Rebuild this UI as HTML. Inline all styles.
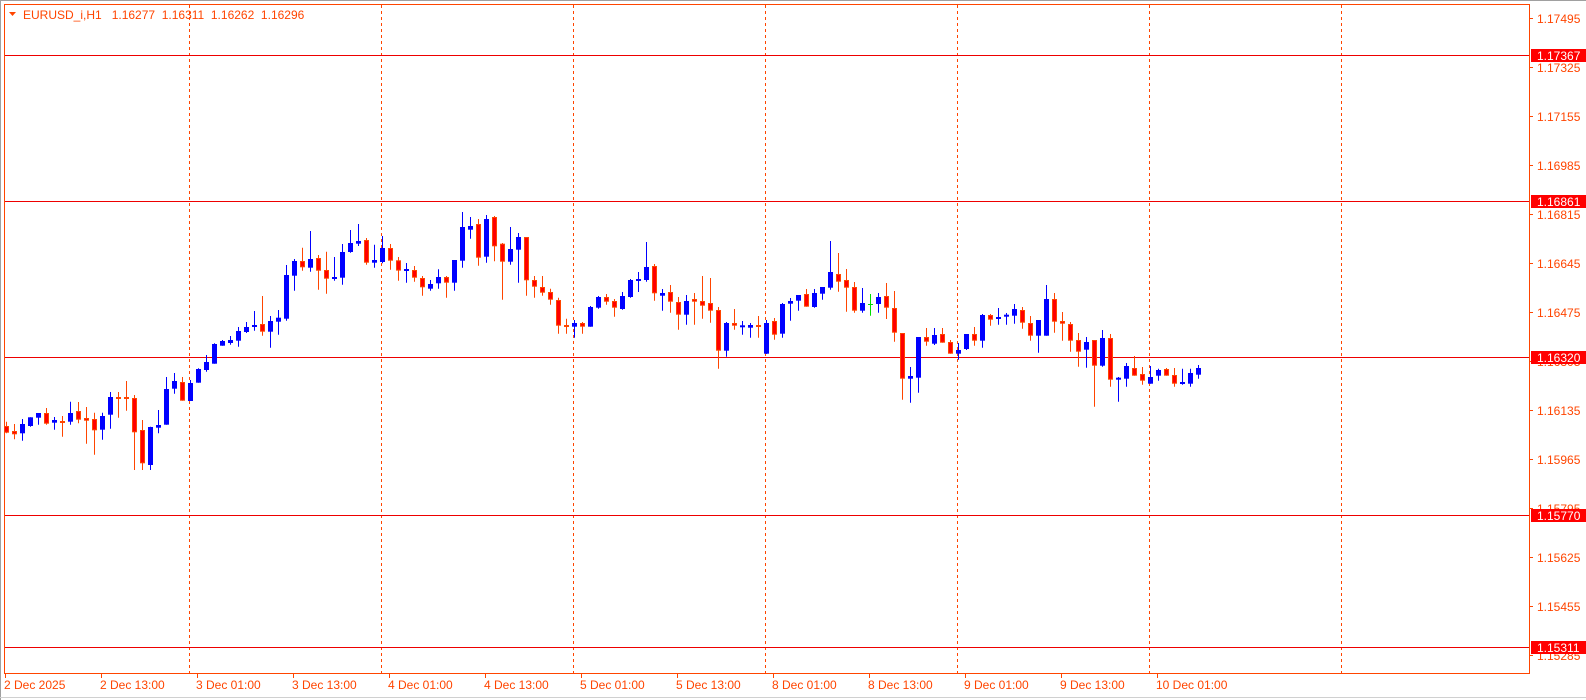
<!DOCTYPE html>
<html><head><meta charset="utf-8">
<style>
html,body{margin:0;padding:0;background:#fff;width:1586px;height:700px;overflow:hidden}
svg{display:block}
text{font-family:"Liberation Sans",sans-serif;font-size:12px}
</style></head>
<body>
<svg id="c" width="1586" height="700" xmlns="http://www.w3.org/2000/svg">
<rect x="0" y="0" width="1586" height="700" fill="#fff"/>
<line x1="0" y1="0.5" x2="1586" y2="0.5" stroke="#a0a0a0"/>
<line x1="0.5" y1="0" x2="0.5" y2="700" stroke="#a0a0a0"/>
<line x1="0" y1="697.5" x2="1586" y2="697.5" stroke="#d0d0d0"/>
<g stroke="#ff4500" stroke-dasharray="3,3" stroke-width="1">
<line x1="189.5" y1="5" x2="189.5" y2="673"/>
<line x1="381.5" y1="5" x2="381.5" y2="673"/>
<line x1="573.5" y1="5" x2="573.5" y2="673"/>
<line x1="765.5" y1="5" x2="765.5" y2="673"/>
<line x1="957.5" y1="5" x2="957.5" y2="673"/>
<line x1="1149.5" y1="5" x2="1149.5" y2="673"/>
<line x1="1341.5" y1="5" x2="1341.5" y2="673"/>
</g>
<g stroke="#ee0000" stroke-width="1">
<line x1="4" y1="55.5" x2="1529" y2="55.5"/>
<line x1="4" y1="201.5" x2="1529" y2="201.5"/>
<line x1="4" y1="357.5" x2="1529" y2="357.5"/>
<line x1="4" y1="515.5" x2="1529" y2="515.5"/>
<line x1="4" y1="647.5" x2="1529" y2="647.5"/>
</g>
<g id="candles"></g>
<rect x="4.5" y="4.5" width="1525" height="669" fill="none" stroke="#ff4500"/>
<g stroke="#ff4500">
<line x1="1529" y1="18.5" x2="1533" y2="18.5"/>
<line x1="1529" y1="67.5" x2="1533" y2="67.5"/>
<line x1="1529" y1="116.5" x2="1533" y2="116.5"/>
<line x1="1529" y1="165.5" x2="1533" y2="165.5"/>
<line x1="1529" y1="214.5" x2="1533" y2="214.5"/>
<line x1="1529" y1="263.5" x2="1533" y2="263.5"/>
<line x1="1529" y1="312.5" x2="1533" y2="312.5"/>
<line x1="1529" y1="361.5" x2="1533" y2="361.5"/>
<line x1="1529" y1="410.5" x2="1533" y2="410.5"/>
<line x1="1529" y1="459.5" x2="1533" y2="459.5"/>
<line x1="1529" y1="508.5" x2="1533" y2="508.5"/>
<line x1="1529" y1="557.5" x2="1533" y2="557.5"/>
<line x1="1529" y1="606.5" x2="1533" y2="606.5"/>
<line x1="1529" y1="655.5" x2="1533" y2="655.5"/>
<line x1="5.5" y1="673" x2="5.5" y2="678"/>
<line x1="101.5" y1="673" x2="101.5" y2="678"/>
<line x1="197.5" y1="673" x2="197.5" y2="678"/>
<line x1="293.5" y1="673" x2="293.5" y2="678"/>
<line x1="389.5" y1="673" x2="389.5" y2="678"/>
<line x1="485.5" y1="673" x2="485.5" y2="678"/>
<line x1="581.5" y1="673" x2="581.5" y2="678"/>
<line x1="677.5" y1="673" x2="677.5" y2="678"/>
<line x1="773.5" y1="673" x2="773.5" y2="678"/>
<line x1="869.5" y1="673" x2="869.5" y2="678"/>
<line x1="965.5" y1="673" x2="965.5" y2="678"/>
<line x1="1061.5" y1="673" x2="1061.5" y2="678"/>
<line x1="1157.5" y1="673" x2="1157.5" y2="678"/>
</g>
<g fill="#ff4500">
<text x="1537" y="23">1.17495</text>
<text x="1537" y="72">1.17325</text>
<text x="1537" y="121">1.17155</text>
<text x="1537" y="170">1.16985</text>
<text x="1537" y="219">1.16815</text>
<text x="1537" y="268">1.16645</text>
<text x="1537" y="317">1.16475</text>
<text x="1537" y="366">1.16305</text>
<text x="1537" y="415">1.16135</text>
<text x="1537" y="464">1.15965</text>
<text x="1537" y="513">1.15795</text>
<text x="1537" y="562">1.15625</text>
<text x="1537" y="611">1.15455</text>
<text x="1537" y="660">1.15285</text>
<text x="4" y="689">2 Dec 2025</text>
<text x="100" y="689">2 Dec 13:00</text>
<text x="196" y="689">3 Dec 01:00</text>
<text x="292" y="689">3 Dec 13:00</text>
<text x="388" y="689">4 Dec 01:00</text>
<text x="484" y="689">4 Dec 13:00</text>
<text x="580" y="689">5 Dec 01:00</text>
<text x="676" y="689">5 Dec 13:00</text>
<text x="772" y="689">8 Dec 01:00</text>
<text x="868" y="689">8 Dec 13:00</text>
<text x="964" y="689">9 Dec 01:00</text>
<text x="1060" y="689">9 Dec 13:00</text>
<text x="1156" y="689">10 Dec 01:00</text>
<text x="23" y="19">EURUSD_i,H1&#160;&#160;&#160;1.16277&#160;&#160;1.16311&#160;&#160;1.16262&#160;&#160;1.16296</text>
</g>
<polygon points="9,12 16,12 12.5,16" fill="#ff4500"/>
<g>
<rect x="1531" y="49" width="55" height="13" fill="#ff0000"/><text x="1537" y="60" fill="#fff">1.17367</text>
<rect x="1531" y="195" width="55" height="13" fill="#ff0000"/><text x="1537" y="206" fill="#fff">1.16861</text>
<rect x="1531" y="351" width="55" height="13" fill="#ff0000"/><text x="1537" y="362" fill="#fff">1.16320</text>
<rect x="1531" y="509" width="55" height="13" fill="#ff0000"/><text x="1537" y="520" fill="#fff">1.15770</text>
<rect x="1531" y="641" width="55" height="13" fill="#ff0000"/><text x="1537" y="652" fill="#fff">1.15311</text>
</g>
</svg>
<script>
var S=[
[0,200,[
"d 665 678 698 700","d 672 693 703 718","u 657 672 700 722","u 652 652 678 680","u 639 639 653 674",
"d 624 639 671 674","u 651 660 668 689","d 648 663 667 710","u 605 639 665 674","d 606 633 659 670",
"d 621 654 662 731","d 638 657 691 764","u 638 648 689 719","u 576 591 644 686","d 576 591 593 653",
"d 543 591 596 632","d 585 594 697 810","d 660 690 790 810","u 680 681 795 810","u 630 675 683 700",
"u 531 567 674 674","u 519 543 566 581","d 531 546 602 602","u 540 549 603 603","u 505 507 548 548",
"u 465 486 510 515","u 430 432 491 491","u 420 423 437 437","u 408 420 429 434","u 381 393 422 440",
"u 366 381 396 399","u 333 375 381 392","d 288 372 395 407","u 348 363 395 443","u 330 353 365 404",
"u 195 225 356 362","u 177 183 227 272"]],
[37,200,[
"d 143 183 202 212","u 93 177 203 215","d 165 174 212 269","d 155 210 236 281","u 171 231 237 242",
"u 132 156 233 254","u 90 129 156 158","u 72 123 131 138","d 114 120 188 194","u 134 180 188 203",
"u 108 144 186 190","d 132 144 182 209","d 171 181 212 242","u 189 207 212 248","d 198 210 233 245",
"d 228 234 262 287","u 240 252 266 272","u 208 231 250 266","d 228 231 248 293","u 180 180 248 272",
"u 36 81 182 203","u 51 78 89 116","d 57 72 173 197","u 45 57 170 188","d 48 51 139 184",
"d 129 131 185 299","u 81 147 185 194","u 99 111 149 248","d 111 111 241 287","d 228 240 260 293",
"d 228 261 278 287","d 266 276 299 314","d 293 300 377 401","d 356 375 380 401","u 360 369 380 413",
"d 366 369 380 401","u 318 321 380 380","u 288 291 323 326"]],
[75,230,[
"d 192 201 215 224","d 207 213 233 260","u 186 198 237 239","u 147 150 201 203","u 126 147 152 186",
"u 36 111 150 155","d 102 108 190 212","u 177 189 197 242","d 165 186 215 248","d 201 216 254 299",
"u 195 213 254 284","d 189 207 215 284","d 138 213 227 266","d 144 219 242 278","d 231 240 362 416",
"u 276 279 362 380","d 237 279 287 299","u 273 286 287 314","u 279 285 293 323","d 258 285 287 323",
"u 270 279 371 372","d 264 273 314 329","u 219 222 311 323","u 204 213 221 272","u 195 195 212 242",
"d 177 192 230 230","u 177 189 231 233","u 171 171 191 209","u 33 126 173 179","d 69 132 155 185",
"d 117 150 173 245","d 156 171 242 248","u 174 219 242 248","g 192 222 224 257","u 189 201 222 248"]],
[110,270,[
"d 39 78 113 147","d 63 114 188 215","d 189 189 326 389","u 291 318 326 398","u 201 201 323 368",
"d 174 201 215 227","u 174 195 221 225","d 174 192 218 218","d 210 216 251 251","u 219 240 251 269",
"u 192 192 237 240","d 171 192 212 227","u 132 135 212 233","d 132 135 149 167","u 114 141 146 164",
"u 129 134 140 164","u 102 117 137 161","d 111 120 158 176","d 138 159 197 212","u 150 150 197 248",
"u 45 87 197 197","d 69 87 155 188","d 126 153 161 212","d 156 162 212 245","d 189 210 245 290",
"u 201 216 239 293","d 210 210 287 410","u 180 204 287 290","d 192 204 329 350","u 321 323 329 395",
"u 279 288 326 350","d 258 294 317 317","d 291 312 332 344","u 288 321 341 341","u 296 300 317 332",
"d 294 297 317 317","d 294 315 341 350","u 296 336 341 344","u 296 309 341 350","u 285 294 314 326"]]
];
var g=document.getElementById('candles'),h='';
S.forEach(function(s){
  s[2].forEach(function(str,i){
    var p=str.split(' '),k=s[0]+i,x=Math.round(5.7+8*k);
    var y=function(v){return s[1]+(+v)/3;};
    var hi=y(p[1]),t=y(p[2]),b=y(p[3]),lo=y(p[4]);
    if(lo<b)lo=b; if(hi>t)hi=t;
    var col=p[0]=='u'?'#0000ff':(p[0]=='g'?'#00dd00':'#ff4500');
    h+='<line x1="'+(x+0.5)+'" y1="'+hi.toFixed(1)+'" x2="'+(x+0.5)+'" y2="'+lo.toFixed(1)+'" stroke="'+col+'"/>';
    var bh=Math.max(b-t,1);
    if(p[0]=='u'){
      h+='<rect x="'+(x-2)+'" y="'+t.toFixed(1)+'" width="5" height="'+Math.max(bh,2).toFixed(1)+'" fill="#0000ff"/>';
    }else if(p[0]=='g'){
      h+='<rect x="'+(x-2)+'" y="'+t.toFixed(1)+'" width="5" height="1" fill="#00dd00"/>';
    }else{
      if(bh<2){h+='<rect x="'+(x-2)+'" y="'+t.toFixed(1)+'" width="5" height="2" fill="#ff4500"/>';}
      else h+='<rect x="'+(x-1.5)+'" y="'+(t+0.5).toFixed(1)+'" width="4" height="'+(bh-1).toFixed(1)+'" fill="#ff0000" stroke="#ff4500" stroke-width="1"/>';
    }
  });
});
g.innerHTML=h;
</script>
</body></html>
